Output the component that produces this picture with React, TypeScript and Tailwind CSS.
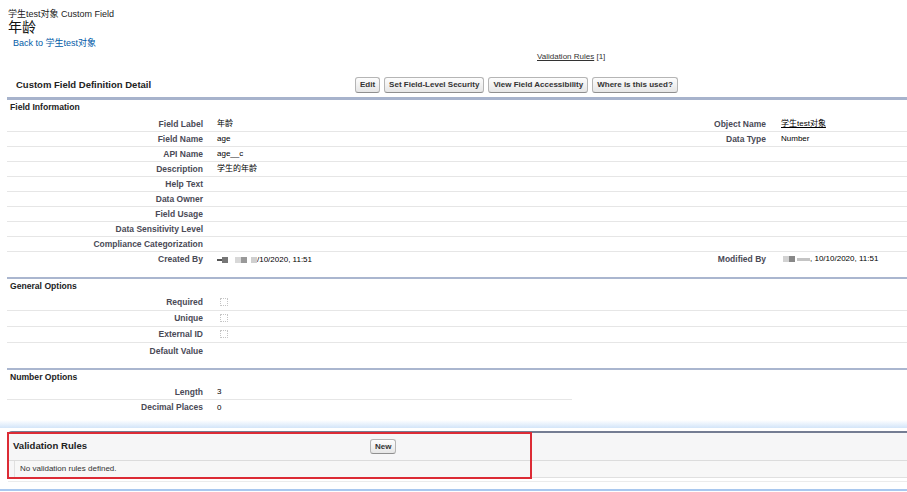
import React from "react";

const font = "font-['Liberation_Sans','Noto_Sans_CJK_SC',Arial,sans-serif]";

type Row = { label: string; value?: React.ReactNode; label2?: string; value2?: React.ReactNode };

function Btn({ children }: { children: React.ReactNode }) {
  return (
    <button className="h-[16px] px-[4px] rounded-[3px] border border-[#b5b5b5] border-b-[#8f8f8f] bg-linear-to-b from-[#fdfdfd] to-[#e6e6e6] text-[8px] leading-[14px] font-bold text-[#333]">
      {children}
    </button>
  );
}

function Blur({ w, c, h = 6, ml = 0 }: { w: number; c: string; h?: number; ml?: number }) {
  return (
    <span
      className="inline-block blur-[0.6px] align-middle"
      style={{ width: w, height: h, background: c, marginLeft: ml }}
    />
  );
}

function Check() {
  return <span className="inline-block ml-[3px] w-[8px] h-[8px] border border-dotted border-[#c4c4c4] rounded-[1px] align-middle" />;
}

function DetailRows({ rows, h, narrow }: { rows: Row[]; h: string; narrow?: boolean }) {
  return (
    <div className={narrow ? "w-[565px]" : ""}>
      {rows.map((r, i) => (
        <div
          key={i}
          className={`flex items-center ${h} ${i < rows.length - 1 ? "border-b border-[#e6e6e6]" : ""}`}
        >
          <div className="w-[200px] shrink-0 text-right pr-[4px] text-[8.5px] font-bold text-[#4a4a56]">{r.label}</div>
          <div className="w-[355px] shrink-0 pl-[10px] text-[8px] text-black">{r.value}</div>
          {!narrow && (
            <>
              <div className="w-[208px] shrink-0 text-right pr-[4px] text-[8.5px] font-bold text-[#4a4a56]">{r.label2}</div>
              <div className="flex-1 pl-[11px] text-[8px] text-black">{r.value2}</div>
            </>
          )}
        </div>
      ))}
    </div>
  );
}

export default function App() {
  const fieldInfo: Row[] = [
    { label: "Field Label", value: "年龄", label2: "Object Name", value2: <span className="underline">学生test对象</span> },
    { label: "Field Name", value: "age", label2: "Data Type", value2: "Number" },
    { label: "API Name", value: "age__c" },
    { label: "Description", value: "学生的年龄" },
    { label: "Help Text" },
    { label: "Data Owner" },
    { label: "Field Usage" },
    { label: "Data Sensitivity Level" },
    { label: "Compliance Categorization" },
    {
      label: "Created By",
      value: (
        <span className="inline-flex items-center">
          <Blur w={5} h={2} c="#555" />
          <Blur w={6} c="#777" />
          <Blur w={6} c="#d8d8d8" ml={7} />
          <Blur w={6} c="#999" />
          <Blur w={6} c="#cfcfcf" ml={4} />
          <span>/10/2020, 11:51</span>
        </span>
      ),
      label2: "Modified By",
      value2: (
        <span className="inline-flex items-center">
          <Blur w={6} c="#d2d2d2" ml={2} />
          <Blur w={6} c="#888" />
          <Blur w={13} h={3} c="#c4c4c4" ml={2} />
          <span>, 10/10/2020, 11:51</span>
        </span>
      ),
    },
  ];

  const general: Row[] = [
    { label: "Required", value: <Check /> },
    { label: "Unique", value: <Check /> },
    { label: "External ID", value: <Check /> },
    { label: "Default Value" },
  ];

  const numberOpts: Row[] = [
    { label: "Length", value: "3" },
    { label: "Decimal Places", value: "0" },
  ];

  return (
    <div className={`w-[907px] h-[492px] overflow-hidden bg-white text-black ${font}`}>
      {/* page title */}
      <div className="pl-[8px] pt-[9px]">
        <div className="text-[9px] leading-[10px] text-[#222]">学生test对象 Custom Field</div>
        <div className="text-[14px] leading-[16px] text-[#111]">年龄</div>
        <div className="mt-[2px] pl-[5px] text-[9px] leading-[12px] text-[#015ba7]">Back to 学生test对象</div>
      </div>

      <div className="mt-[2px] pl-[537px] text-[8px] leading-[12px] text-[#333]">
        <span className="underline">Validation Rules</span> [1]
      </div>

      {/* detail block */}
      <div className="ml-[7px]">
        <div className="mt-[10px] h-[24px] flex items-center">
          <div className="w-[348px] shrink-0 pl-[9px] text-[9.5px] font-bold text-[#222]">Custom Field Definition Detail</div>
          <div className="flex gap-[4px]">
            <Btn>Edit</Btn>
            <Btn>Set Field-Level Security</Btn>
            <Btn>View Field Accessibility</Btn>
            <Btn>Where is this used?</Btn>
          </div>
        </div>

        <div className="border-t-[3px] border-[#a7b3cc]">
          <div className="h-[15px] flex items-center pl-[3px] text-[8.6px] font-bold text-[#222]">Field Information</div>
          <div className="pt-[2px] pb-[10px]">
            <DetailRows rows={fieldInfo} h="h-[15px]" />
          </div>
        </div>

        <div className="border-t-[2px] border-[#aab6cf]">
          <div className="h-[15px] flex items-center pl-[3px] text-[8.6px] font-bold text-[#222]">General Options</div>
          <div className="pt-[1px] pb-[9px]">
            <DetailRows rows={general} h="h-[16px]" />
          </div>
        </div>

        <div className="border-t-[2px] border-[#aab6cf]">
          <div className="h-[14px] flex items-center pl-[3px] text-[8.6px] font-bold text-[#222]">Number Options</div>
          <div className="pt-[1px] pb-[5px]">
            <DetailRows rows={numberOpts} h="h-[15px]" narrow />
          </div>
        </div>
      </div>

      <div className="h-[8px] bg-linear-to-b from-white to-[#d3e5f9]" />
      <div className="h-[3px]" />

      {/* related list */}
      <div className="relative ml-[8px]">
        <div className="border-t-2 border-[#747d93] rounded-tl-[4px] bg-[#f6f6f7]">
          <div className="h-[28px] flex items-center border-b border-[#dcdcdc]">
            <div className="w-[362px] shrink-0 pl-[5px] text-[9.6px] font-bold text-[#222]">Validation Rules</div>
            <button className="h-[15px] px-[4px] rounded-[3px] border border-[#b5b5b5] border-b-[#8f8f8f] bg-linear-to-b from-[#fdfdfd] to-[#e6e6e6] text-[8px] leading-[13px] font-bold text-[#333]">
              New
            </button>
          </div>
          <div className="ml-[6px] h-[17px] flex items-center border-l border-b border-[#e0e0e0] bg-[#f7f7f7] pl-[5px] text-[8px] text-[#333]">
            No validation rules defined.
          </div>
        </div>
        <div className="h-[4px] border-b border-[#ececec]" />
        {/* red annotation box */}
        <div className="absolute left-[-1px] top-[1px] w-[525px] h-[47px] border-2 border-[#dc2b35]" />
      </div>

      <div className="mt-[7px] h-[2px] bg-[#a9c8ef]" />
    </div>
  );
}
